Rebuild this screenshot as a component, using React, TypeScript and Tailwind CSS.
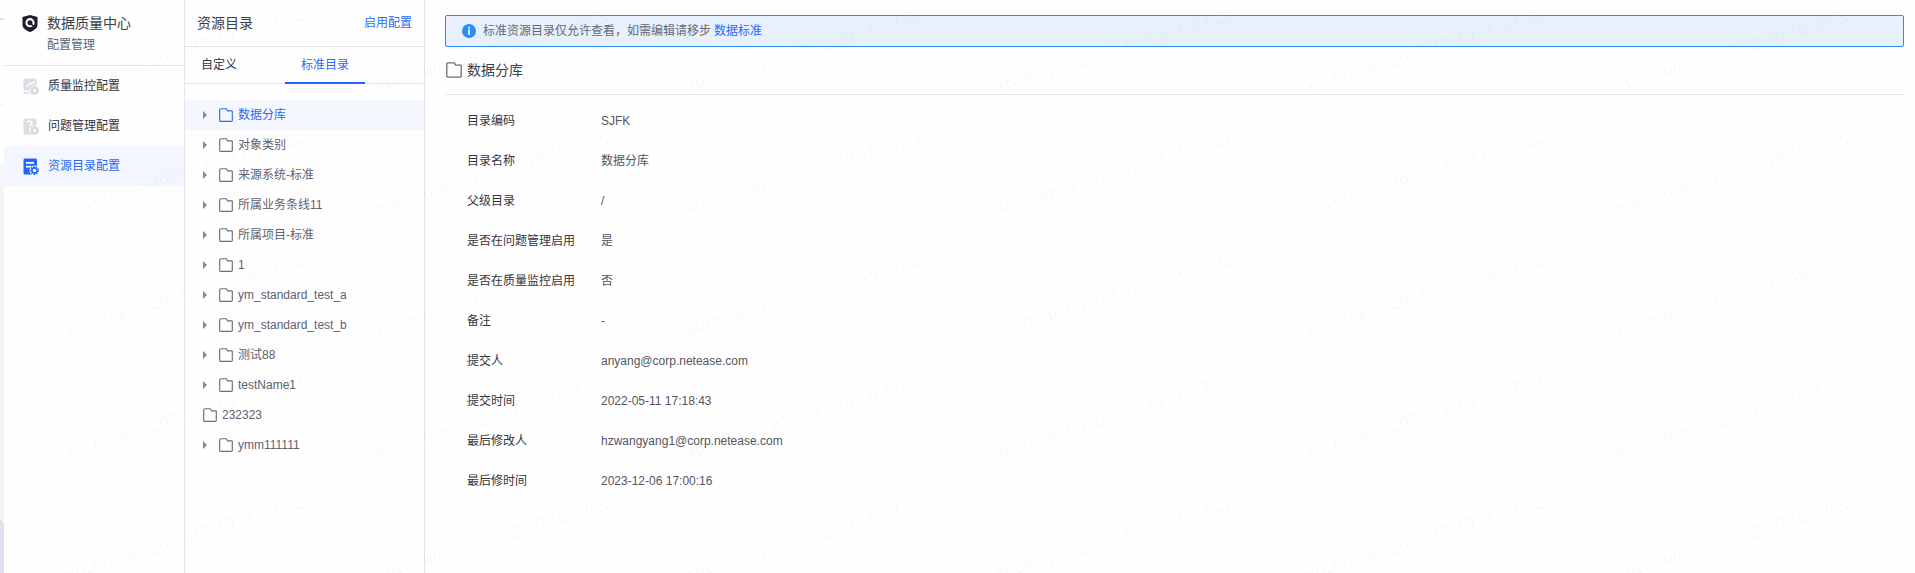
import React from "react";

const FONT = "[font-family:'Liberation_Sans','Noto_Sans_CJK_SC',sans-serif]";

function Folder({ color = "#6b6e7b", size = 14 }: { color?: string; size?: number }) {
  return (
    <svg width={size} height={size} viewBox="0 0 14 14" fill="none" className="shrink-0">
      <path
        d="M1.9 0.7H7.2L8.6 2.8H12.6C13 2.8 13.3 3.1 13.3 3.5V12.4C13.3 12.9 12.9 13.3 12.4 13.3H1.6C1.1 13.3 0.7 12.9 0.7 12.4V1.9C0.7 1.2 1.2 0.7 1.9 0.7Z"
        stroke={color}
        strokeWidth="1.15"
      />
    </svg>
  );
}

function Caret() {
  return (
    <svg width="4" height="8" viewBox="0 0 4 8" className="shrink-0">
      <path d="M0 0L4 4L0 8Z" fill="#85889a" />
    </svg>
  );
}

function Gear({ color, cx, cy }: { color: string; cx: number; cy: number }) {
  return (
    <g>
      <circle cx={cx} cy={cy} r="5" fill="#fff" />
      <circle cx={cx} cy={cy} r="2.6" fill="none" stroke={color} strokeWidth="1.7" />
      <circle cx={cx} cy={cy} r="4" fill="none" stroke={color} strokeWidth="1.1" strokeDasharray="1.5 1.3" />
    </g>
  );
}

function Logo() {
  return (
    <svg width="16" height="17" viewBox="0 0 16 17" className="shrink-0">
      <path d="M8 0L15.5 2V10C15.5 13 12 15.5 8 17C4 15.5 0.5 13 0.5 10V2Z" fill="#1b1e2b" />
      <circle cx="8" cy="7.7" r="4.6" fill="#fff" />
      <circle cx="8" cy="7.7" r="2.5" fill="#1b1e2b" />
      <path d="M9 9L12 11.6" stroke="#1b1e2b" strokeWidth="1.6" />
    </svg>
  );
}

function MonitorIcon() {
  return (
    <svg width="16" height="17" viewBox="0 0 16 17" className="shrink-0">
      <rect x="0.5" y="0.5" width="13" height="12" rx="1.5" fill="#dcdde5" />
      <path d="M3 9L7 5L8.5 6.5L12 3" stroke="#fff" strokeWidth="1.4" fill="none" />
      <rect x="0.5" y="14" width="9" height="1.6" fill="#dcdde5" />
      <Gear color="#d2d4de" cx={11.5} cy={12.5} />
    </svg>
  );
}

function QuestionIcon() {
  return (
    <svg width="16" height="17" viewBox="0 0 16 17" className="shrink-0">
      <rect x="0.5" y="0.5" width="13" height="16" rx="1.5" fill="#dcdde5" />
      <path d="M4.5 5.2C4.5 3.8 5.6 3.2 6.7 3.2C8 3.2 9 4 9 5.1C9 6.6 6.9 6.6 6.9 8.4" stroke="#fff" strokeWidth="1.5" fill="none" />
      <rect x="6" y="10" width="1.8" height="1.8" fill="#fff" />
      <Gear color="#d2d4de" cx={11.5} cy={12.5} />
    </svg>
  );
}

function CatalogIcon() {
  return (
    <svg width="16" height="17" viewBox="0 0 16 17" className="shrink-0">
      <rect x="0.5" y="0.5" width="13.5" height="16" rx="1.5" fill="#2266f6" />
      <rect x="3" y="4" width="8" height="1.7" fill="#fff" />
      <rect x="3" y="7.8" width="5" height="1.7" fill="#fff" />
      <Gear color="#2266f6" cx={11.5} cy={12.5} />
    </svg>
  );
}

function InfoIcon() {
  return (
    <svg width="14" height="14" viewBox="0 0 14 14" className="shrink-0">
      <circle cx="7" cy="7" r="7" fill="#2a8cf7" />
      <rect x="6.1" y="2.8" width="1.8" height="1.8" fill="#fff" />
      <rect x="6.1" y="5.6" width="1.8" height="5.4" fill="#fff" />
    </svg>
  );
}

const nav = [
  { label: "质量监控配置", icon: <MonitorIcon /> },
  { label: "问题管理配置", icon: <QuestionIcon /> },
  { label: "资源目录配置", icon: <CatalogIcon />, active: true },
];

const tree = [
  { label: "数据分库", active: true },
  { label: "对象类别" },
  { label: "来源系统-标准" },
  { label: "所属业务条线11" },
  { label: "所属项目-标准" },
  { label: "1" },
  { label: "ym_standard_test_a" },
  { label: "ym_standard_test_b" },
  { label: "测试88" },
  { label: "testName1" },
  { label: "232323", leaf: true },
  { label: "ymm111111" },
];

const details = [
  ["目录编码", "SJFK"],
  ["目录名称", "数据分库"],
  ["父级目录", "/"],
  ["是否在问题管理启用", "是"],
  ["是否在质量监控启用", "否"],
  ["备注", "-"],
  ["提交人", "anyang@corp.netease.com"],
  ["提交时间", "2022-05-11 17:18:43"],
  ["最后修改人", "hzwangyang1@corp.netease.com"],
  ["最后修时间", "2023-12-06 17:00:16"],
];

function Watermark() {
  const cells = Array.from({ length: 35 });
  return (
    <div className="pointer-events-none absolute inset-0 overflow-hidden">
      <div className="ml-[-280px] mt-[-11px] grid w-[2170px] grid-cols-[repeat(7,310px)] auto-rows-[122px]">
        {cells.map((_, i) => (
          <div key={i} className="flex items-center justify-center">
            <span className="rotate-[-17deg] whitespace-nowrap text-[17px] text-black/[0.035] [font-family:'Open_Sans',sans-serif]">
              xuchuqiao 2023-12-19 16:37:22
            </span>
          </div>
        ))}
      </div>
    </div>
  );
}

export default function App() {
  return (
    <div className={`relative flex h-[573px] w-full overflow-hidden bg-[#fefefe] text-[12px] ${FONT}`}>
      {/* strip of the page behind the panels */}
      <div className="flex w-1 shrink-0 flex-col bg-white">
        <div className="mt-[18px] h-0.5 bg-[#e4e4e4]" />
        <div className="mt-[85px] h-px bg-[#ececec]" />
        <div className="mt-[59px] h-[355px] bg-[#f5f5f5]" />
        <div className="flex-1 rounded-tr-sm bg-[#dfe3f1]" />
      </div>

      {/* sidebar */}
      <aside className="w-[181px] shrink-0 border-r border-[#e3e4ec]">
        <div className="h-[66px] border-b border-[#e3e4ec] pl-[18px] pt-[14px]">
          <div className="flex h-[18px] items-center gap-[9px]">
            <Logo />
            <span className="text-[14px] leading-[18px] text-[#3b3d49]">数据质量中心</span>
          </div>
          <div className="mt-[4px] pl-[25px] text-[12px] leading-[18px] text-[#5f6270]">配置管理</div>
        </div>
        <nav>
          {nav.map((n) => (
            <div
              key={n.label}
              className={`flex h-10 items-center gap-[9px] pl-[19px] ${n.active ? "bg-[#f3f6fe] text-[#2b6af5]" : "text-[#33353f]"}`}
            >
              {n.icon}
              <span>{n.label}</span>
            </div>
          ))}
        </nav>
      </aside>

      {/* tree column */}
      <section className="w-[240px] shrink-0 border-r border-[#e3e4ec]">
        <div className="flex h-[47px] items-center justify-between border-b border-[#e3e4ec] pl-3 pr-3">
          <span className="text-[14px] text-[#3b3d49]">资源目录</span>
          <span className="text-[12px] text-[#2b6af5]">启用配置</span>
        </div>
        <div className="flex h-[37px] border-b border-[#e3e4ec]">
          <div className="ml-4 flex h-[36px] items-center text-[#33353f]">自定义</div>
          <div className="ml-12 flex h-[37px] w-20 items-center justify-center border-b-2 border-[#2266f6] text-[#2b6af5]">标准目录</div>
        </div>
        <div className="mt-4">
          {tree.map((t) => (
            <div
              key={t.label}
              className={`flex h-[30px] items-center pl-[18px] ${t.active ? "bg-[#f5f7fe] text-[#2b6af5]" : "text-[#5f6270]"}`}
            >
              {t.leaf ? null : (
                <span className="flex w-[16px] shrink-0 items-center">
                  <Caret />
                </span>
              )}
              <Folder color={t.active ? "#2b6af5" : "#6b6e7b"} />
              <span className="ml-[5px] whitespace-nowrap">{t.label}</span>
            </div>
          ))}
        </div>
      </section>

      {/* detail column */}
      <main className="min-w-0 flex-1 pl-5 pr-[11px] pt-[15px]">
        <div className="flex h-[32px] items-center rounded-[2px] border border-[#2a8cf7] bg-[#e8f0fe] pl-4 text-[#666974]">
          <InfoIcon />
          <span className="ml-[7px]">标准资源目录仅允许查看，如需编辑请移步</span>
          <span className="ml-[3px] text-[#2b6af5]">数据标准</span>
        </div>
        <div className="flex h-[48px] items-center border-b border-[#e4e5ed] pb-[1px] pl-px">
          <Folder size={16} />
          <span className="ml-[5px] text-[14px] text-[#3b3d49]">数据分库</span>
        </div>
        <dl className="mt-[6px] pl-[22px]">
          {details.map(([k, v]) => (
            <div key={k} className="flex h-10 items-center">
              <dt className="w-[134px] shrink-0 text-[#33353f]">{k}</dt>
              <dd className="text-[#54565f]">{v}</dd>
            </div>
          ))}
        </dl>
      </main>

      <Watermark />
    </div>
  );
}
